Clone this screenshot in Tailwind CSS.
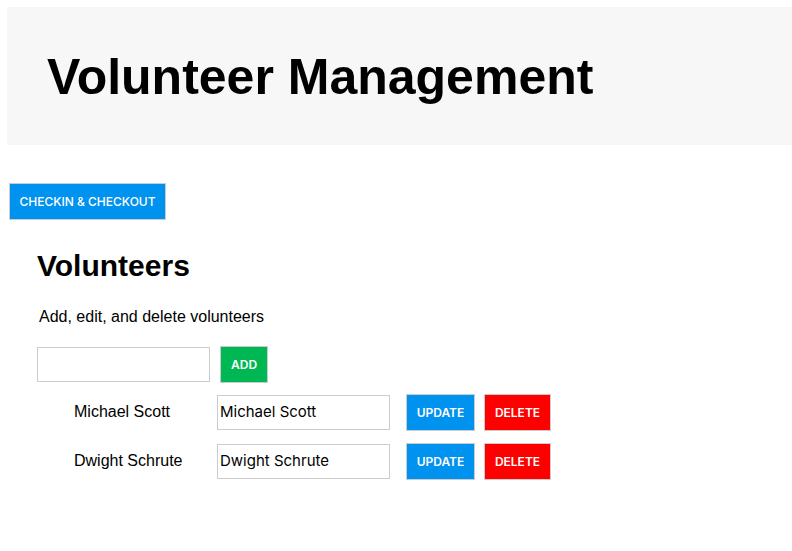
<!DOCTYPE html>
<html lang="en">
<head>
<meta charset="utf-8">
<title>Volunteer Management</title>
<script src="https://cdn.jsdelivr.net/npm/@tailwindcss/browser@4"></script>
</head>
<body class="bg-white font-['Liberation_Sans',Arial,sans-serif] text-base text-black">
<header class="mt-[7px] ml-[7px] bg-[#f7f7f7] px-10 pt-[41px] pb-[39px]">
  <h1 class="text-[50px] leading-[58px] font-bold">Volunteer Management</h1>
</header>
<main class="pt-[38px] pl-[9px]">
  <a href="#checkin" class="inline-flex h-[37px] w-[157px] items-center justify-center border border-[#ccc] bg-[#0092ef] font-[Inter,sans-serif] text-[12px] font-medium text-white">CHECKIN &amp; CHECKOUT</a>
  <section class="pt-7 pl-7">
    <h2 class="text-[30px] leading-9 font-bold">Volunteers</h2>
    <p class="mt-[21px] ml-[2px] leading-6">Add, edit, and delete volunteers</p>
    <form class="mt-[17px] flex items-center gap-[10px]">
      <input type="text" aria-label="New volunteer name" class="h-[35px] w-[173px] border border-[#ccc] px-[2px] font-[Inter,sans-serif] text-[15px]">
      <button type="button" class="h-[37px] border border-[#ccc] bg-[#00b853] px-[10px] font-[Inter,sans-serif] text-[12px] font-semibold text-white">ADD</button>
    </form>
    <ul class="mt-[11px] flex flex-col gap-3 pl-[37px]">
      <li class="flex items-center">
        <label for="v1" class="w-[143px] pb-[2px]">Michael Scott</label>
        <input id="v1" type="text" value="Michael Scott" class="mr-4 h-[35px] w-[173px] border border-[#ccc] px-[2px] pb-[2px] font-[Inter,sans-serif] text-[15px]">
        <button type="button" class="mr-[9px] h-[37px] w-[69px] border border-[#ccc] bg-[#0092ef] font-[Inter,sans-serif] text-[12px] font-semibold text-white">UPDATE</button>
        <button type="button" class="h-[37px] w-[67px] border border-[#ccc] bg-[#ff0000] font-[Inter,sans-serif] text-[12px] font-semibold text-white">DELETE</button>
      </li>
      <li class="flex items-center">
        <label for="v2" class="w-[143px] pb-[2px]">Dwight Schrute</label>
        <input id="v2" type="text" value="Dwight Schrute" class="mr-4 h-[35px] w-[173px] border border-[#ccc] px-[2px] pb-[2px] font-[Inter,sans-serif] text-[15px]">
        <button type="button" class="mr-[9px] h-[37px] w-[69px] border border-[#ccc] bg-[#0092ef] font-[Inter,sans-serif] text-[12px] font-semibold text-white">UPDATE</button>
        <button type="button" class="h-[37px] w-[67px] border border-[#ccc] bg-[#ff0000] font-[Inter,sans-serif] text-[12px] font-semibold text-white">DELETE</button>
      </li>
    </ul>
  </section>
</main>
</body>
</html>
